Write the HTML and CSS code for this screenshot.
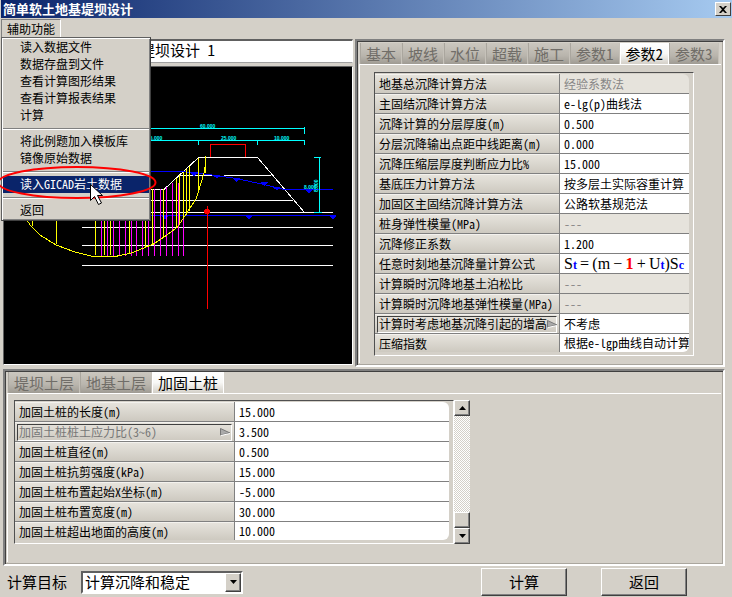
FILE: index.html
```html
<!DOCTYPE html>
<html lang="zh-CN">
<head>
<meta charset="utf-8">
<title>简单软土地基堤坝设计</title>
<link rel="stylesheet" href="styles.css">
</head>
<body>
<header class="titlebar">
  <h1>简单软土地基堤坝设计</h1>
  <button class="close" aria-label="关闭"><svg width="8" height="7" viewBox="0 0 8 7"><path d="M0 0h2l2 2 2-2h2L5 3.500 8 7H6L4 5 2 7H0l3-3.500z"/></svg></button>
</header>
<nav class="menubar">
  <div class="menu">
    <button class="menu-title">辅助功能</button>
    <div class="popup">
      <button>读入数据文件</button>
      <button>数据存盘到文件</button>
      <button>查看计算图形结果</button>
      <button>查看计算报表结果</button>
      <button>计算</button>
      <hr>
      <button>将此例题加入模板库</button>
      <button>镜像原始数据</button>
      <hr>
      <button class="active">读入GICAD岩土数据</button>
      <hr>
      <button>返回</button>
      <svg class="marker" width="164" height="46" viewBox="-4 161 164 46">
        <ellipse cx="77" cy="182.500" rx="78.500" ry="15.500" fill="none" stroke="#f00" stroke-width="2"/>
        <path d="M90.500 184.500v16l4-4 4 8 3-1.500-4-7.500h5z" fill="#fff" stroke="#000" stroke-width="1"/>
      </svg>
    </div>
  </div>
</nav>
<main>
  <div class="upper">
    <section class="preview">
      <input class="project" aria-label="项目" value="简单软土地基堤坝设计 1">
      <div class="canvas">
      <svg viewBox="4 67 348 296">
        <g fill="none" stroke="#fff">
          <path d="M150 189.500h14l34.500-32h59l47 55M178 175.500h35M224 175.500h47M150 200.500h143M82 212.500h251M82 227.500h251M82 245.500h251M82 265.500h251"/>
        </g>
        <g fill="none" stroke="#00f">
          <path d="M60 171.500h121l10 1 25 3 20 3 28 6 20 5h49M60 215.500h276"/>
        </g>
        <path fill="#00f" d="M189 172h9l-4 4zM212 175h9l-4 3zM232 178h8l-4 4zM260 182h8l-4 4zM272 187h8l-3 3zM305 190h8l-4 3zM161 216h8l-4 3zM245 216h8l-4 3zM329 216h8l-4 3z"/>
        <path stroke="#f0f" d="M101.500 189v67M107.500 189v67M113.500 189v67M119.500 189v67M125.500 189v67M131.500 189v67M136.500 189v67M142.500 189v67M148.500 189v67M154.500 189v67M160.500 189v67M166.500 187v69M172.500 183v73M178.500 183v73M183.500 217v39"/>
        <g fill="none" stroke="#ff0">
          <path d="M32.500 200v26M56.500 190v54M95.500 190v65M104.500 190v65M110.500 190v65M129.500 189v64M145.500 189v59M152.500 189v55M163.500 189v48M176.500 178v49M179.500 175v50M183.500 172v47M186.500 169v46M189.500 166v45M198.500 158v35M205.500 156v17"/>
          <path d="M205.500 156v7l-1 8-2 7-6 20-9 14-10 15-12 9-12 8-22 9-14 3H91l-16-4-19-7-16-10-10-10-6-10"/>
        </g>
        <path fill="none" stroke="#f00" d="M210.500 157v-12.500h35V157M207.500 206v103"/>
        <circle cx="207" cy="211.500" r="3" fill="#f00"/>
        <path fill="none" stroke="#0ff" d="M60 128.500h244.500M304.500 127v7M60 140.500h244.500v4M198.500 140v5M257.500 140v5M314 157.500h7M319.500 157v55M314 212.500h8"/>
        <g class="dims">
          <text x="200" y="128">60.000</text>
          <text x="147" y="140">25.000</text>
          <text x="221" y="140">25.000</text>
          <text x="274" y="140">10.000</text>
          <text x="304" y="189">8.000</text>
          <text transform="translate(318 192) rotate(-90)">8.000</text>
        </g>
      </svg>
      </div>
    </section>
    <section class="panel">
      <div class="tabs">
        <button>基本</button><button>坡线</button><button>水位</button><button>超载</button><button>施工</button><button>参数1</button><button class="on">参数2</button><button>参数3</button>
      </div>
      <div class="page">
        <div class="frame params">
        <table>
          <tr><th><label for="a1">地基总沉降计算方法</label></th><td class="off"><input id="a1" disabled value="经验系数法"></td></tr>
          <tr><th><label for="a2">主固结沉降计算方法</label></th><td><input id="a2" value="e-lg(p)曲线法"></td></tr>
          <tr><th><label for="a3">沉降计算的分层厚度(m)</label></th><td><input id="a3" value="0.500"></td></tr>
          <tr><th><label for="a4">分层沉降输出点距中线距离(m)</label></th><td><input id="a4" value="0.000"></td></tr>
          <tr><th><label for="a5">沉降压缩层厚度判断应力比%</label></th><td><input id="a5" value="15.000"></td></tr>
          <tr><th><label for="a6">基底压力计算方法</label></th><td><input id="a6" value="按多层土实际容重计算"></td></tr>
          <tr><th><label for="a7">加固区主固结沉降计算方法</label></th><td><input id="a7" value="公路软基规范法"></td></tr>
          <tr><th><label for="a8">桩身弹性模量(MPa)</label></th><td class="off"><input id="a8" disabled value="---"></td></tr>
          <tr><th><label for="a9">沉降修正系数</label></th><td><input id="a9" value="1.200"></td></tr>
          <tr><th>任意时刻地基沉降量计算公式</th><td class="formula">S<i>t</i>&thinsp;=&thinsp;(m&thinsp;−&thinsp;<b>1</b>&thinsp;+&thinsp;U<i>t</i>)S<i>c</i></td></tr>
          <tr><th><label for="a11">计算瞬时沉降地基土泊松比</label></th><td class="off"><input id="a11" disabled value="---"></td></tr>
          <tr><th><label for="a12">计算瞬时沉降地基弹性模量(MPa)</label></th><td class="off"><input id="a12" disabled value="---"></td></tr>
          <tr><th class="pick"><label for="a13">计算时考虑地基沉降引起的增高<svg class="tri" width="11" height="8" viewBox="0 0 11 8"><path d="M.5 7V.5L10 5z" fill="#aaa" stroke="#777"/><path d="M1 7.500 10 5.500" stroke="#fff"/></svg></label></th><td><input id="a13" value="不考虑"></td></tr>
          <tr><th><label for="a14">压缩指数</label></th><td><input id="a14" value="根据e-lgp曲线自动计算"></td></tr>
        </table>
        </div>
      </div>
    </section>
  </div>
  <section class="panel lower">
    <div class="tabs">
      <button>堤坝土层</button><button>地基土层</button><button class="on">加固土桩</button>
    </div>
    <div class="page">
      <div class="scroller">
        <div class="frame piles">
        <table>
          <tr><th><label for="b1">加固土桩的长度(m)</label></th><td><input id="b1" value="15.000"></td></tr>
          <tr><th class="pick dim"><label for="b2">加固土桩桩土应力比(3~6)<svg class="tri" width="11" height="8" viewBox="0 0 11 8"><path d="M.5 7V.5L10 5z" fill="#aaa" stroke="#777"/><path d="M1 7.500 10 5.500" stroke="#fff"/></svg></label></th><td><input id="b2" value="3.500"></td></tr>
          <tr><th><label for="b3">加固土桩直径(m)</label></th><td><input id="b3" value="0.500"></td></tr>
          <tr><th><label for="b4">加固土桩抗剪强度(kPa)</label></th><td><input id="b4" value="15.000"></td></tr>
          <tr><th><label for="b5">加固土桩布置起始X坐标(m)</label></th><td><input id="b5" value="-5.000"></td></tr>
          <tr><th><label for="b6">加固土桩布置宽度(m)</label></th><td><input id="b6" value="30.000"></td></tr>
          <tr><th><label for="b7">加固土桩超出地面的高度(m)</label></th><td><input id="b7" value="10.000"></td></tr>
        </table>
        </div>
        <div class="scrollbar">
          <button aria-label="向上"><svg width="7" height="4" viewBox="0 0 7 4"><path d="M0 4h7L3.500 0z"/></svg></button>
          <div class="track"><div class="thumb"></div></div>
          <button aria-label="向下"><svg width="7" height="4" viewBox="0 0 7 4"><path d="M0 0h7L3.500 4z"/></svg></button>
        </div>
      </div>
    </div>
  </section>
</main>
<footer class="actions">
  <label for="target">计算目标</label>
  <div class="combo">
    <select id="target"><option>计算沉降和稳定</option></select>
    <span class="drop"><svg width="7" height="4" viewBox="0 0 7 4"><path d="M0 0h7L3.500 4z"/></svg></span>
  </div>
  <div class="buttons">
    <button>计算</button>
    <button>返回</button>
  </div>
</footer>
</body>
</html>
```
FILE: styles.css
```css
* { box-sizing: border-box; }
body {
  margin: 0;
  background: #d4d0c8;
  color: #000;
  font: 12px/16px "Noto Sans Mono CJK SC", "Noto Sans CJK SC", monospace;
}
button, input, select {
  font: inherit;
  color: inherit;
  margin: 0;
  padding: 0;
  border: 0;
  border-radius: 0;
  background: none;
}
svg { display: block; }

.titlebar {
  display: flex;
  align-items: center;
  justify-content: space-between;
  height: 18px;
  margin-left: 1px;
  padding: 0 1px 0 2px;
  background: linear-gradient(90deg, #0a246a, #a6caf0);
  color: #fff;
}
.titlebar h1 { margin: 0; font-size: 13px; font-weight: bold; line-height: 16px; }
.close {
  display: grid;
  place-items: center;
  width: 16px;
  height: 14px;
  background: #d4d0c8;
  border: 1px solid;
  border-color: #fff #404040 #404040 #fff;
}

.menubar { height: 21px; padding: 1px 0 0 1px; }
.menu { position: relative; width: 60px; }
.menu-title {
  width: 60px;
  height: 19px;
  line-height: 16px;
  border: 1px solid;
  border-color: #808080 #fff #fff #808080;
}
.popup {
  position: absolute;
  z-index: 2;
  top: 18px;
  left: 0;
  width: 150px;
  padding: 1px;
  background: #d4d0c8;
  border: 1px solid;
  border-color: #606060 #404040 #404040 #606060;
  box-shadow: inset 1px 1px #fff, inset -1px -1px #808080;
}
.popup button {
  display: block;
  width: 100%;
  height: 17px;
  padding: 0 0 2px 17px;
  line-height: 15px;
  text-align: left;
}
.popup .active { background: #0a246a; color: #fff; }
.popup hr {
  height: 2px;
  margin: 4px 0 3px;
  border: 0;
  border-top: 1px solid #808080;
  border-bottom: 1px solid #fff;
}
.marker { position: absolute; left: -6px; top: 123px; }

main { padding: 0 7px 0 3px; }
.upper {
  display: grid;
  grid-template-columns: minmax(0, 350fr) minmax(0, 370fr);
  gap: 2px;
  margin-bottom: 2px;
}
.preview { display: flex; flex-direction: column; gap: 3px; padding-bottom: 2px; }
.project {
  width: 100%;
  height: 24px;
  padding: 0 0 4px 46px;
  font-size: 15px;
  line-height: 17px;
  background: #fff;
  border: 1px solid;
  border-width: 2px 1px 1px 1px;
  border-color: #606060 #fff #a0a0a0 #606060;
}
.canvas {
  flex: 1;
  background: #000;
  border: 1px solid;
  border-color: #606060 #fff #fff #606060;
}
.canvas svg { width: 100%; shape-rendering: crispEdges; }
.dims { fill: #0ff; font: bold 5px "Liberation Sans", sans-serif; }

.panel {
  border: 2px solid;
  border-color: #808080 #fff #fff #808080;
  box-shadow: inset 1px 1px #404040, inset -1px -1px #aaa69e;
  padding: 2px;
}
.tabs { display: flex; height: 21px; padding-left: 1px; }
.tabs button {
  flex: none;
  padding: 0 5px;
  font-size: 15px;
  line-height: 20px;
  color: #706d68;
  background: linear-gradient(#cbc7bf, #b9b5ad 60%, #9f9b93);
  border-left: 1px solid #aaa69e;
  border-right: 1px solid #c6c2ba;
}
.tabs .on { color: #000; background: linear-gradient(#fff, #f8f8f6 50%, #d4d0c8); border-color: #fff; }
.page { border-top: 1px solid #fff; border-left: 1px solid #fff; padding: 7px 0 7px 14px; }
.frame {
  border: 1px solid;
  border-color: #505050 #fff #fff #505050;
  padding: 1px 4px 3px 0;
}
.params { width: 320px; }
.piles { width: 440px; }
table { width: 100%; border-collapse: separate; border-spacing: 0; table-layout: fixed; }
th, td { height: 20px; padding: 0; border-bottom: 1px solid #808080; overflow: hidden; }
tr:last-child > * { height: 18px; border-bottom: 0; }
th {
  width: 184px;
  padding-left: 4px;
  font-weight: normal;
  text-align: left;
  white-space: nowrap;
  line-height: 16px;
  background: linear-gradient(#e6e3dc, #cdc9c0);
  border-top: 1px solid #f4f2ee;
}
.piles th { width: 219px; }
td { background: #fff; border-left: 1px solid #808080; }
td input { display: block; width: 100%; height: 16px; padding-left: 4px; }
.off { background: #e6e3dc; color: #868686; }
.off input { color: #868686; }
tr:first-child td { border-top-right-radius: 6px; }
tr:last-child td { border-bottom-right-radius: 6px; }
.pick { padding: 0 2px; }
.pick label {
  display: flex;
  align-items: center;
  height: 17px;
  padding-left: 1px;
  border: 1px solid;
  border-color: #404040 #fff #fff #404040;
}
.dim { color: #777; }
.tri { flex: none; margin-left: auto; }
.formula {
  padding-left: 4px;
  font: 16px/18px "Liberation Serif", serif;
  white-space: nowrap;
  overflow: visible;
}
.formula i { font-size: 12px; line-height: 12px; font-style: normal; font-weight: bold; color: #00f; }
.formula b { color: #f00; }

.lower { padding-top: 1px; }
.lower .page { padding: 6px 0 18px 6px; }
.scroller { display: flex; }
.scrollbar { display: flex; flex-direction: column; width: 16px; }
.scrollbar button, .thumb, .drop {
  display: grid;
  place-items: center;
  height: 16px;
  background: #d4d0c8;
  border: 1px solid;
  border-color: #fff #404040 #404040 #fff;
  box-shadow: inset -1px -1px #808080;
}
.track {
  flex: 1;
  display: flex;
  flex-direction: column;
  justify-content: flex-end;
  background: repeating-conic-gradient(#fff 0 25%, #d4d0c8 0 50%) 0 0 / 2px 2px;
}

.actions {
  display: flex;
  align-items: center;
  height: 32px;
  padding: 0 45px 0 7px;
  font-size: 15px;
}
.combo {
  display: grid;
  width: 162px;
  height: 23px;
  margin-left: 14px;
  background: #fff;
  border: 2px solid;
  border-color: #606060 #fff #fff #606060;
}
.combo > * { grid-area: 1 / 1; }
.combo select { appearance: none; width: 100%; padding-left: 2px; }
.drop { justify-self: end; width: 16px; height: 19px; pointer-events: none; }
.buttons { display: flex; gap: 34px; margin-left: auto; }
.buttons button {
  width: 86px;
  height: 28px;
  border: 1px solid;
  border-color: #fff #404040 #404040 #fff;
  box-shadow: inset -1px -1px #808080;
}
```
